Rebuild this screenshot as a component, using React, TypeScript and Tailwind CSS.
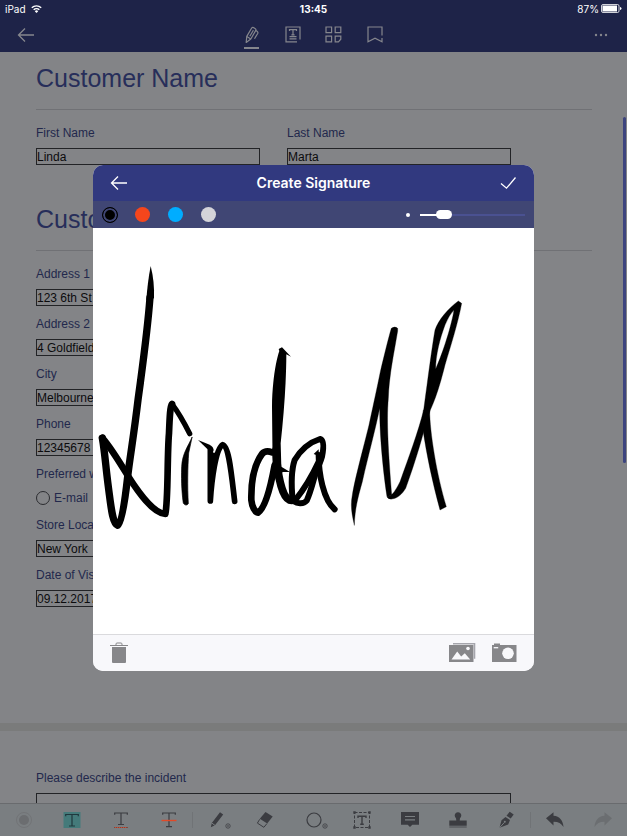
import React from 'react';

interface FieldProps {
  id: string;
  label: string;
  value: string;
}

const Field: React.FC<FieldProps> = ({ id, label, value }) => (
  <div className="flex flex-col gap-1.5">
    <label htmlFor={id} className="text-[12px] leading-[17px] text-[#22284c]">
      {label}
    </label>
    <input
      id={id}
      type="text"
      defaultValue={value}
      className="h-[17px] w-full border border-[#222326] bg-transparent text-[12px] leading-4 text-[#0b0b0d] outline-none"
    />
  </div>
);

const SectionTitle: React.FC<{ children: React.ReactNode }> = ({ children }) => (
  <h2 className="mb-[15px] border-b border-[#707175] pb-[15px] text-[25px] leading-8 text-[#272e5a]">
    {children}
  </h2>
);

const BackArrow = () => (
  <svg width="18" height="16" viewBox="0 0 18 16" fill="none" stroke="currentColor" strokeWidth="1.3">
    <path d="M17 8H1.5M8 1.5 1.5 8 8 14.5" />
  </svg>
);

const StatusBar = () => (
  <div className="grid h-[17px] grid-cols-3 items-center px-[5px] text-[10px] leading-4 text-white">
    <div className="flex items-center gap-[5px]">
      <span>iPad</span>
      <svg width="11" height="8" viewBox="0 0 11 8" fill="none" stroke="currentColor">
        <path d="M.8 2.8a6.7 6.7 0 0 1 9.4 0" strokeWidth="1.4" />
        <path d="M2.7 4.8a4 4 0 0 1 5.6 0" strokeWidth="1.4" />
        <path d="M5.5 8 3.8 6.2a2.4 2.4 0 0 1 3.4 0z" fill="currentColor" stroke="none" />
      </svg>
    </div>
    <span className="text-center font-bold">13:45</span>
    <div className="flex items-center justify-end gap-0.5">
      <span>87%</span>
      <svg width="21" height="9" viewBox="0 0 21 9">
        <rect x=".5" y=".5" width="17.5" height="8" rx="1.5" fill="none" stroke="currentColor" strokeWidth=".8" />
        <rect x="1.5" y="1.5" width="14.5" height="6" fill="currentColor" />
        <path d="M19 3v3q1.5-.3 1.5-1.5T19 3z" fill="currentColor" />
      </svg>
    </div>
  </div>
);

const NavBar = () => (
  <nav className="grid h-[35px] grid-cols-3 items-center px-[17px] text-[#85868d]">
    <button aria-label="Back" className="justify-self-start">
      <BackArrow />
    </button>
    <div className="flex justify-center">
      <button aria-label="Annotate" className="relative flex h-[35px] w-[41px] items-center justify-center">
        <svg width="16" height="18" viewBox="0 0 16 18" fill="none" stroke="currentColor" strokeWidth="1.2" strokeLinejoin="round">
          <path d="m2.2 16.4.6-6L7.7 2Q8.4 1 9.5 1.6l1.8 1.1q1 .7.5 1.7L6.8 13z" />
          <path d="m2.8 10.4 4 2.6M11.8 4.4l1.2.8q1.4 1 .7 2.3l-3.2 5.2" />
          <path d="m5.8 10.2 3.6-6" />
        </svg>
        <span className="absolute inset-x-[13px] bottom-[3px] h-[2px] bg-[#85868d]" />
      </button>
      <button aria-label="Text view" className="flex w-[41px] items-center justify-center">
        <svg width="16" height="17" viewBox="0 0 16 17" fill="none" stroke="currentColor" strokeWidth="1.2">
          <path d="M12 15.8H1V1h14v12.5M4.5 5V3.6h7V5M8 3.6v5.2M6.4 8.8h3.2M4.5 10.7h7M4.5 12.8h7" />
        </svg>
      </button>
      <button aria-label="Pages" className="flex w-[41px] items-center justify-center">
        <svg width="17" height="17" viewBox="0 0 17 17" fill="none" stroke="currentColor" strokeWidth="1.2">
          <path d="M1 1h5.6v5.6H1zM10.2 1h5.6v5.6h-5.6zM1 10.2h5.6v5.6H1zM13.4 15.8h-3.2v-5.6h5.6v3z" />
        </svg>
      </button>
      <button aria-label="Bookmarks" className="flex w-[41px] items-center justify-center">
        <svg width="16" height="17" viewBox="0 0 16 17" fill="none" stroke="currentColor" strokeWidth="1.2">
          <path d="M15 9.5V1H1v14.8l7-3.6 7 3.6V12" />
        </svg>
      </button>
    </div>
    <button aria-label="More" className="mr-[2px] justify-self-end">
      <svg width="14" height="4" viewBox="0 0 14 4" fill="currentColor">
        <circle cx="2" cy="2" r="1.2" />
        <circle cx="7" cy="2" r="1.2" />
        <circle cx="12" cy="2" r="1.2" />
      </svg>
    </button>
  </nav>
);

const Document = () => (
  <main className="relative min-h-0 flex-1 overflow-hidden bg-[#7a7b7b] font-['Liberation_Sans',Arial,sans-serif]">
    <div className="flex flex-col gap-2">
      <section className="bg-[#838487] pt-2.5 pr-[35px] pb-[116px] pl-9">
        <SectionTitle>Customer Name</SectionTitle>
        <div className="mb-[38px] grid max-w-[475px] grid-cols-2 gap-[27px]">
          <Field id="first-name" label="First Name" value="Linda" />
          <Field id="last-name" label="Last Name" value="Marta" />
        </div>

        <SectionTitle>Customer Details</SectionTitle>
        <div className="flex max-w-[475px] flex-col gap-2.5">
          <Field id="address-1" label="Address 1" value="123 6th St" />
          <Field id="address-2" label="Address 2" value="4 Goldfield" />
          <Field id="city" label="City" value="Melbourne" />
          <Field id="phone" label="Phone" value="12345678" />
          <fieldset className="text-[12px] leading-[17px] text-[#22284c]">
            <legend className="mb-1.5">Preferred way of contact</legend>
            <label className="flex h-[18px] items-center gap-1">
              <input
                type="radio"
                name="contact"
                className="size-[14px] appearance-none rounded-full border border-[#2b2c30]"
              />
              E-mail
            </label>
          </fieldset>
          <Field id="store" label="Store Location" value="New York" />
          <Field id="visit" label="Date of Visit" value="09.12.2017" />
        </div>
      </section>

      <section className="bg-[#838487] pt-[39px] pr-[35px] pb-10 pl-9">
        <div className="flex max-w-[475px] flex-col gap-1.5">
          <label htmlFor="incident" className="text-[12px] leading-[17px] text-[#22284c]">
            Please describe the incident
          </label>
          <textarea id="incident" className="h-20 resize-none border border-[#222326] bg-transparent" />
        </div>
      </section>
    </div>

    {/* Scroll indicator */}
    <span className="absolute top-[65px] right-px h-[346px] w-[3px] rounded-full bg-[#3d447e]" />
  </main>
);

interface ToolProps {
  label: string;
  divider?: boolean;
  children: React.ReactNode;
}

const Tool: React.FC<ToolProps> = ({ label, divider, children }) => (
  <button
    aria-label={label}
    className={
      divider
        ? 'relative flex flex-1 items-center justify-center after:absolute after:right-0 after:h-4 after:w-px after:bg-[#707376]'
        : 'flex flex-1 items-center justify-center'
    }
  >
    <svg width="32" height="20" viewBox="0 0 32 20" fill="none" stroke="currentColor">
      {children}
    </svg>
  </button>
);

const Toolbar = () => (
  <footer className="flex h-[33px] border-t border-[#696b6e] bg-[#7a7e81] text-[#3b3c41]">
    <Tool label="Colour">
      <circle cx="16" cy="10" r="7.5" stroke="#727477" />
      <circle cx="16" cy="10" r="5" fill="#6b6d70" stroke="none" />
    </Tool>
    <Tool label="Highlight">
      <path d="M7.5 2h17v16h-17z" fill="#447a7a" stroke="none" />
      <path d="M9.7 6.2V4.5h12.6v1.7M16 4.5V16M13 16h6" stroke="#20383d" strokeWidth="1.2" />
    </Tool>
    <Tool label="Underline">
      <path d="M9.7 4.7V3h12.6v1.7M16 3v11.5M13 14.5h6" strokeWidth="1.2" />
      <path d="M9 17.5h14" stroke="#7d463d" />
      <path d="M10 17.5h12" stroke="#d34a2d" strokeDasharray="1 1" />
    </Tool>
    <Tool label="Strike through" divider>
      <path d="M9.7 4.7V3h12.6v1.7M16 3v13.5M13 16.7h6" strokeWidth="1.2" />
      <path d="M8.5 10.5h15" stroke="#e04a28" strokeWidth="1.4" />
    </Tool>
    <Tool label="Pencil">
      <path d="m9.8 17.2 1-4.2L19 2.2l3.2 2.4L14 15.3zM11 13l3 2.3" fill="currentColor" stroke="none" />
      <path d="m10.5 12.8 3.6 2.7" stroke="#7a7e81" />
      <circle cx="27" cy="16" r="2.2" strokeWidth=".8" />
      <circle cx="27" cy="16" r=".8" fill="currentColor" stroke="none" />
    </Tool>
    <Tool label="Eraser">
      <path d="m16.5 2 7.2 4.5-5.5 7-7.4-4.7z" fill="currentColor" stroke="none" />
      <path d="m10.7 9.3-2.3 3.8 6.5 4.2 3-3.7" strokeWidth="1" />
    </Tool>
    <Tool label="Shape">
      <circle cx="16" cy="10" r="7" strokeWidth="1.2" />
      <circle cx="27" cy="16" r="2.2" strokeWidth=".8" />
      <circle cx="27" cy="16" r=".8" fill="currentColor" stroke="none" />
    </Tool>
    <Tool label="Text box">
      <path d="M8.5 2.5h15v15h-15z" strokeDasharray="3 1.5" />
      <path d="M12 8V6.3h8V8M16 6.3v8M14.2 14.3h3.6" strokeWidth="1.4" />
      <path d="M7.3 1.3h2.4v2.4H7.3zM22.3 1.3h2.4v2.4h-2.4zM7.3 16.3h2.4v2.4H7.3zM22.3 16.3h2.4v2.4h-2.4z" fill="currentColor" stroke="none" />
    </Tool>
    <Tool label="Comment">
      <path d="M7 2h18v12.7h-6.7L16 17l-2.3-2.3H7z" fill="currentColor" stroke="none" />
      <path d="M11 6.5h10M11 9.8h10" stroke="#7a7e81" strokeWidth="1.2" />
    </Tool>
    <Tool label="Stamp">
      <path d="M14.3 10.5 14 8.2a3.3 3.3 0 1 1 4 0l-.3 2.3h7v5.2H7.3v-5.2z" fill="currentColor" stroke="none" />
      <path d="M7.3 17h17.4" stroke="#5c5e62" strokeWidth="1.6" />
    </Tool>
    <Tool label="Signature" divider>
      <path d="m9.5 17.8 2-7.5 4-3.3 4.5 3-1.8 4.5zM16.5 5.7 19.7 1.7l4 2.8-3 4z" fill="currentColor" stroke="none" />
      <path d="m9.5 17.8 4.8-5.3" stroke="#7a7e81" />
      <circle cx="14.8" cy="11.8" r="1" fill="#7a7e81" stroke="none" />
    </Tool>
    <Tool label="Undo">
      <path d="m7 8.2 7.5-6v3.6c6.2.3 9.6 5 10 11.2-2.2-3.6-5.3-5.3-10-5.2v3.6z" fill="currentColor" stroke="none" />
    </Tool>
    <Tool label="Redo">
      <path d="m25 8.2-7.5-6v3.6c-6.2.3-9.6 5-10 11.2 2.2-3.6 5.3-5.3 10-5.2v3.6z" fill="#6b6e71" stroke="none" />
    </Tool>
  </footer>
);

const Signature = () => (
  <svg
    role="img"
    aria-label="Signature"
    viewBox="0 0 1323 1218"
    className="block h-auto w-full bg-white"
    fill="none"
    stroke="black"
    strokeWidth="20"
    strokeLinecap="round"
    strokeLinejoin="round"
  >
    <g transform="translate(0 36)">
      {/* L */}
      <path d="M173 78C166 115 162 150 160 180L183 175Q185 125 173 78Z" fill="black" stroke="none" />
      <path d="M171 172C164 270 150 370 135 480C122 590 111 650 104 710C95 790 85 850 74 856C58 850 54 800 46 740C38 680 36 640 28 594" strokeWidth="22" />
      <path d="M28 594C55 625 85 675 105 708C135 755 180 820 217 822C226 780 222 650 228 580C230 530 231 500 237 492" />
      <path d="M237 492C252 512 272 545 290 581" strokeWidth="16" />
      {/* i */}
      <path d="M297 592C285 620 268 640 266 680C264 730 268 770 271 790Q279 800 286 791C283 740 284 680 287 640Z" fill="black" strokeWidth="2" />
      {/* n */}
      <path d="M315 600L350 614Q362 620 362 632L346 630Z" fill="black" stroke="none" />
      <path d="M352 630V783C356 720 368 625 389 614C408 618 415 700 425 784" strokeWidth="17" />
      <path d="M355 640L372 640L358 730Z" fill="black" strokeWidth="4" />
    </g>
    {/* d, a */}
    <g transform="translate(441 336)">
      <path d="M116 27L126 22L153 50L139 43C139 120 132 220 122 310L124 380L150 396L128 396L108 420L98 390L96 200C96 130 108 60 118 33Z" fill="black" stroke="none" />
      <path d="M96 337C82 332 72 335 66 342C42 375 33 430 34 480C36 500 45 518 54 518C75 505 92 440 104 375" />
      <path d="M108 330C112 400 125 470 148 480Q155 482 162 480" strokeWidth="23" />
      <path d="M158 480C154 440 154 390 164 360C185 325 215 305 240 297C252 300 252 320 246 350C240 370 235 380 232 385C222 410 215 450 200 482C190 494 170 490 162 484" strokeWidth="18" />
      <path d="M166 480C190 450 215 410 236 365M236 345C236 400 250 480 284 508" strokeWidth="18" />
      <path d="M221 342L236 328V348Z" fill="black" stroke="none" />
    </g>
    {/* M */}
    <g transform="translate(756 201)" fill="black" fillRule="evenodd" strokeWidth="1">
      <path d="M28 690C20 655 16 630 22 600C30 550 55 460 72 390C85 330 98 270 106 230C118 180 130 130 139 100Q150 92 158 100V108C148 170 132 240 130 310C124 380 130 470 140 600L126 605C116 540 104 430 104 340C92 400 70 480 52 560C38 610 30 640 28 690Z" />
      <path d="M138 612C155 612 170 600 182 580C200 530 220 470 236 410L256 345C272 310 285 270 300 210C318 150 340 80 350 25L340 18C310 40 280 75 270 105C262 150 250 240 236 345C220 410 190 490 165 560C155 580 146 595 138 600L126 605Q128 612 138 612ZM327 45C320 90 295 170 272 222C272 180 285 130 300 90Q312 60 327 45Z" />
      <path d="M236 345H254C254 410 275 540 304 635L285 645C262 560 245 480 234 405Z" />
    </g>
  </svg>
);

const colours = [
  { name: 'Black', className: 'size-4 border border-black bg-black ring-2 ring-inset ring-[#404674]' },
  { name: 'Red', className: 'size-[15px] bg-[#f5461c]' },
  { name: 'Blue', className: 'size-[15px] bg-[#00adff]' },
  { name: 'Grey', className: 'size-[15px] bg-[#d4d4d9]' },
];

const SignatureDialog = () => (
  <div className="fixed inset-0 flex items-center justify-center">
    <div role="dialog" aria-labelledby="dialog-title" className="w-full max-w-[441px] overflow-hidden rounded-[10px] bg-white">
      <header className="grid h-9 grid-cols-[1fr_auto_1fr] items-center bg-[#31397f] px-[17px] text-white">
        <button aria-label="Back" className="justify-self-start">
          <BackArrow />
        </button>
        <h1 id="dialog-title" className="text-[14px] leading-4 font-semibold">
          Create Signature
        </h1>
        <button aria-label="Done" className="justify-self-end">
          <svg width="17" height="14" viewBox="0 0 17 14" fill="none" stroke="currentColor" strokeWidth="1.3">
            <path d="m1 7.5 5.5 4.7L15.5 1.5" />
          </svg>
        </button>
      </header>

      <div className="flex h-[27px] items-center bg-[#404674]">
        {colours.map(({ name, className }, i) => (
          <label key={name} className="flex w-[33px] justify-center">
            <input
              type="radio"
              name="colour"
              aria-label={name}
              defaultChecked={i === 0}
              className={`appearance-none rounded-full ${className}`}
            />
          </label>
        ))}
        <span className="ml-auto size-1 rounded-full bg-white" />
        <input
          type="range"
          aria-label="Thickness"
          defaultValue={18}
          className="mr-[9px] ml-2.5 h-[2px] w-[105px] appearance-none bg-linear-to-r from-white from-20% to-[#4a5191] to-20% [&::-webkit-slider-thumb]:h-[9px] [&::-webkit-slider-thumb]:w-4 [&::-webkit-slider-thumb]:appearance-none [&::-webkit-slider-thumb]:rounded-full [&::-webkit-slider-thumb]:bg-white"
        />
      </div>

      <Signature />

      <footer className="flex h-[37px] items-center border-t border-[#dadadd] bg-[#f8f8fb] px-4 text-[#87878a]">
        <button aria-label="Delete">
          <svg width="20" height="22" viewBox="0 0 20 22" fill="none" stroke="currentColor">
            <path d="M1 3.5h18M7 3.2V2Q7 1 8 1h4q1 0 1 1v1.2" />
            <path d="M3 5h14v15q0 1-1 1H4q-1 0-1-1z" fill="currentColor" stroke="none" />
          </svg>
        </button>
        <button aria-label="Photo library" className="ml-auto">
          <svg width="28" height="20" viewBox="0 0 28 20">
            <path d="M4 .8h21.6v15" fill="none" stroke="#a5a5ac" strokeWidth="1.4" />
            <path d="M0 2h24.5v17H0z" fill="currentColor" />
            <path d="m2.5 16.5 5.7-8 4 5 3.6-3.2 5.4 6.2z" fill="#f8f8fb" />
            <circle cx="19" cy="5.5" r="1.8" fill="#f8f8fb" />
          </svg>
        </button>
        <button aria-label="Camera" className="ml-[15px]">
          <svg width="26" height="20" viewBox="0 0 26 20">
            <path d="M0 2h2V.5h6V2h16.5v17H0z" fill="currentColor" />
            <path d="M1.7 4.7h4.5" stroke="#f8f8fb" strokeWidth="1.3" />
            <circle cx="16" cy="10.3" r="5.8" fill="#f8f8fb" />
          </svg>
        </button>
      </footer>
    </div>
  </div>
);

export default function App() {
  return (
    <div className="flex h-screen flex-col overflow-hidden bg-[#838487] font-['Inter',sans-serif]">
      <header className="bg-[#1e2348]">
        <StatusBar />
        <NavBar />
      </header>
      <Document />
      <Toolbar />
      <SignatureDialog />
    </div>
  );
}
